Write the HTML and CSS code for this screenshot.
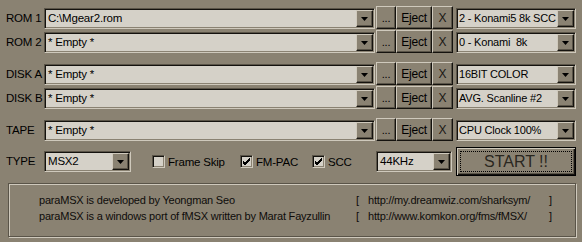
FILE: index.html
```html
<!DOCTYPE html>
<html lang="en">
<head>
<meta charset="UTF-8" />
<title>paraMSX</title>
<link rel="stylesheet" href="styles.css">
</head>
<body>
<div class="dialog">
  <!-- Cartridge slots -->
  <div class="drive-group">
    <div class="row">
      <span class="label">ROM 1</span>
      <div class="combo combo-path"><span class="combo-text">C:\Mgear2.rom</span><span class="drop"></span></div>
      <button class="btn btn-browse">...</button>
      <button class="btn btn-eject">Eject</button>
      <button class="btn btn-clear">X</button>
      <div class="combo combo-option"><span class="combo-text">2 - Konami5 8k SCC</span><span class="drop"></span></div>
    </div>
    <div class="row">
      <span class="label">ROM 2</span>
      <div class="combo combo-path"><span class="combo-text">* Empty *</span><span class="drop"></span></div>
      <button class="btn btn-browse">...</button>
      <button class="btn btn-eject">Eject</button>
      <button class="btn btn-clear">X</button>
      <div class="combo combo-option"><span class="combo-text">0 - Konami&nbsp; 8k</span><span class="drop"></span></div>
    </div>
  </div>

  <!-- Disk drives -->
  <div class="drive-group">
    <div class="row">
      <span class="label">DISK A</span>
      <div class="combo combo-path"><span class="combo-text">* Empty *</span><span class="drop"></span></div>
      <button class="btn btn-browse">...</button>
      <button class="btn btn-eject">Eject</button>
      <button class="btn btn-clear">X</button>
      <div class="combo combo-option"><span class="combo-text">16BIT COLOR</span><span class="drop"></span></div>
    </div>
    <div class="row">
      <span class="label">DISK B</span>
      <div class="combo combo-path"><span class="combo-text">* Empty *</span><span class="drop"></span></div>
      <button class="btn btn-browse">...</button>
      <button class="btn btn-eject">Eject</button>
      <button class="btn btn-clear">X</button>
      <div class="combo combo-option"><span class="combo-text">AVG. Scanline #2</span><span class="drop"></span></div>
    </div>
  </div>

  <!-- Tape -->
  <div class="drive-group">
    <div class="row">
      <span class="label">TAPE</span>
      <div class="combo combo-path"><span class="combo-text">* Empty *</span><span class="drop"></span></div>
      <button class="btn btn-browse">...</button>
      <button class="btn btn-eject">Eject</button>
      <button class="btn btn-clear">X</button>
      <div class="combo combo-option"><span class="combo-text">CPU Clock 100%</span><span class="drop"></span></div>
    </div>
  </div>

  <!-- Machine options -->
  <div class="options-row">
    <span class="label">TYPE</span>
    <div class="combo combo-type"><span class="combo-text">MSX2</span><span class="drop"></span></div>
    <label class="check check-frameskip"><span class="box"></span>Frame Skip</label>
    <label class="check check-fmpac"><span class="box checked"><svg width="9" height="9" viewBox="0 0 9 9"><path d="M1 4l2 2 5-5M1 5l2 2 5-5M1 6l2 2 5-5" stroke="#000" stroke-width="1" fill="none" shape-rendering="crispEdges"/></svg></span>FM-PAC</label>
    <label class="check check-scc"><span class="box checked"><svg width="9" height="9" viewBox="0 0 9 9"><path d="M1 4l2 2 5-5M1 5l2 2 5-5M1 6l2 2 5-5" stroke="#000" stroke-width="1" fill="none" shape-rendering="crispEdges"/></svg></span>SCC</label>
    <div class="combo combo-sound"><span class="combo-text">44KHz</span><span class="drop"></span></div>
    <button class="btn-start"><span>START !!</span></button>
  </div>

  <!-- About box -->
  <div class="info">
    <span>paraMSX is developed by Yeongman Seo</span>
    <span>[</span>
    <span>http://my.dreamwiz.com/sharksym/</span>
    <span>]</span>
    <span>paraMSX is a windows port of fMSX written by Marat Fayzullin</span>
    <span>[</span>
    <span>http://www.komkon.org/fms/fMSX/</span>
    <span>]</span>
  </div>
</div>
</body>
</html>
```

FILE: styles.css
```css
/* Theme colours */
:root {
  --face: #8a8272;
  --light: #cfc9bc;
  --shadow: #5a5448;
  --dark: #14120e;
  --field: #d5d1c8;
}
* {
  box-sizing: border-box;
}
body {
  margin: 0;
  background: var(--face);
  font-family: "Liberation Sans", Arial, sans-serif;
  font-size: 11px;
  letter-spacing: -0.2px;
  color: #000;
}
.dialog {
  padding: 5px 6px 0 6px;
  width: 582px;
  height: 242px;
}
.drive-group + .drive-group {
  margin-top: 8px;
}
.row {
  display: flex;
  align-items: flex-end;
  height: 24px;
}
.label {
  width: 38px;
  height: 21px;
  line-height: 21px;
  flex-shrink: 0;
  font-size: 11.5px;
}

/* Drop-down list */
.combo {
  display: flex;
  height: 21px;
  flex-shrink: 0;
  background: var(--field);
  border: 1px solid;
  border-color: var(--shadow) var(--light) var(--light) var(--shadow);
  box-shadow: inset 1px 1px var(--dark), inset -1px -1px var(--face);
  padding: 1px;
}
.combo-text {
  flex: 1;
  padding-left: 2px;
  line-height: 17px;
  font-size: 11.5px;
  white-space: nowrap;
  overflow: hidden;
}
.combo-option .combo-text {
  padding-left: 1px;
  font-size: 11px;
}
.drop {
  width: 17px;
  height: 17px;
  flex-shrink: 0;
  background: var(--face);
  border: 1px solid;
  border-color: var(--light) var(--dark) var(--dark) var(--light);
  box-shadow: inset -1px -1px var(--shadow);
  display: flex;
  align-items: center;
  justify-content: center;
}
.drop::after {
  content: "";
  width: 7px;
  height: 4px;
  margin-top: 1px;
  background: #000;
  clip-path: polygon(0 0, 100% 0, 50% 100%);
}
.combo-path {
  width: 331px;
}
.combo-option {
  width: 120px;
  margin-left: 3px;
}
.combo-type {
  width: 87px;
}
.combo-sound {
  width: 76px;
}

/* Push buttons */
.btn {
  height: 23px;
  flex-shrink: 0;
  padding: 0;
  background: var(--face);
  font: inherit;
  letter-spacing: inherit;
  color: #000;
  border: 1px solid;
  border-color: var(--light) var(--dark) var(--dark) var(--light);
  box-shadow: inset -1px -1px var(--shadow);
}
.btn-browse {
  width: 20px;
  margin-left: 1px;
}
.btn-eject {
  width: 36px;
  font-size: 12px;
}
.btn-clear {
  width: 21px;
  font-size: 12px;
  font-weight: 300;
  color: #1a1814;
}

/* Options row */
.options-row {
  display: flex;
  align-items: center;
  height: 29px;
  margin-top: 6px;
}
.check {
  display: flex;
  align-items: center;
  flex-shrink: 0;
  font-size: 11.5px;
}
.check-frameskip {
  width: 88px;
  margin-left: 21px;
}
.check-fmpac {
  width: 72px;
}
.check-scc {
  width: 64px;
}
.box {
  width: 13px;
  height: 13px;
  margin-right: 3px;
  background: var(--field);
  border: 1px solid;
  border-color: var(--shadow) var(--light) var(--light) var(--shadow);
  box-shadow: inset 1px 1px var(--dark), inset -1px -1px var(--face);
  display: flex;
  align-items: center;
  justify-content: center;
}
.btn-start {
  width: 120px;
  height: 29px;
  margin-left: 4px;
  padding: 0;
  position: relative;
  background: var(--face);
  border: 1px solid #000;
  box-shadow: inset 1px 1px var(--light), inset -1px -1px var(--dark), inset -2px -2px var(--shadow);
  font-family: "Liberation Sans", Arial, sans-serif;
  font-size: 16px;
  font-weight: normal;
  letter-spacing: 0;
  color: #2a2720;
}
.btn-start::after {
  content: "";
  position: absolute;
  top: 3px;
  left: 3px;
  right: 3px;
  bottom: 3px;
  border: 1px dotted #000;
}

/* About group box */
.info {
  margin: 7px 0 0 2px;
  width: 568px;
  height: 54px;
  padding: 8px 0 0 30px;
  border: 1px solid var(--shadow);
  box-shadow: inset 1px 1px var(--light), 1px 1px var(--light);
  display: grid;
  grid-template-columns: 317px 12px 181px auto;
  grid-auto-rows: 16px;
  line-height: 16px;
  color: #0e0c0a;
}
```
